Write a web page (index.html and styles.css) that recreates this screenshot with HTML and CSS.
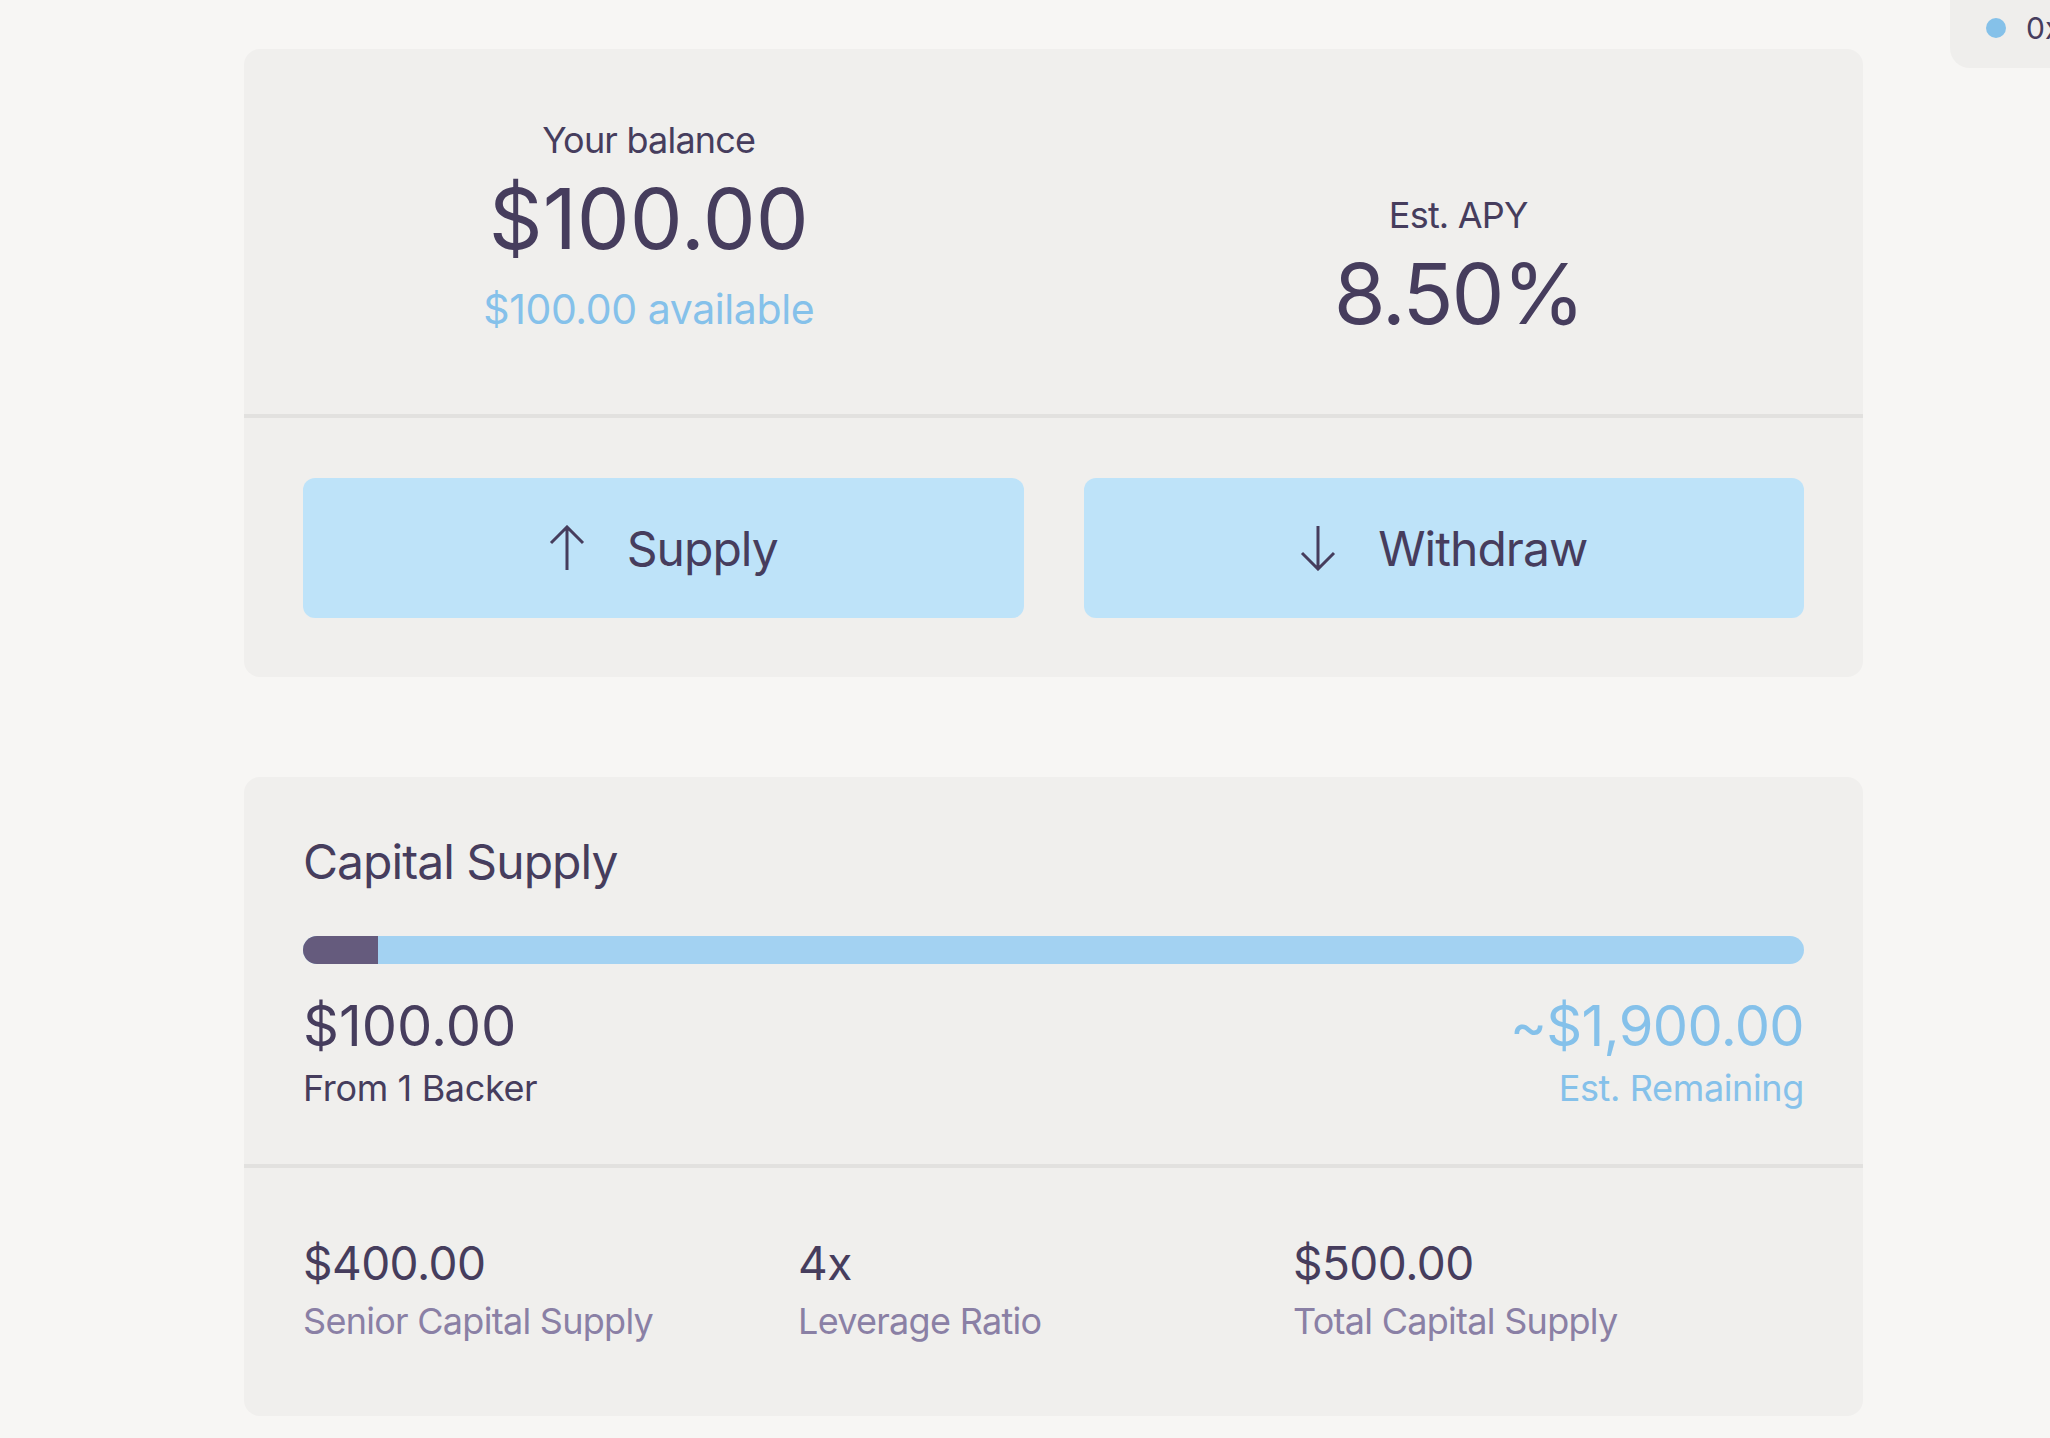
FILE: index.html
```html
<!DOCTYPE html>
<html lang="en">
<head>
<meta charset="utf-8">
<title>Pool</title>
<link rel="stylesheet" href="styles.css">
</head>
<body>
<div class="wallet">
  <span class="wallet-dot"></span>
  <span class="wallet-addr">0x1fa2…8c3d</span>
</div>
<main class="page">
  <section class="card">
    <div class="summary">
      <div class="summary-col">
        <div class="label">Your balance</div>
        <div class="big">$100.00</div>
        <div class="avail">$100.00 available</div>
      </div>
      <div class="summary-col summary-apy">
        <div class="label">Est. APY</div>
        <div class="big">8.50%</div>
      </div>
    </div>
    <div class="actions">
      <button class="btn" type="button">
        <svg class="btn-icon" viewBox="0 0 36 46" width="36" height="46" aria-hidden="true">
          <path d="M18 45 V2 M2 18 L18 2 L34 18" fill="none" stroke="currentColor" stroke-width="3"/>
        </svg>
        <span>Supply</span>
      </button>
      <button class="btn" type="button">
        <svg class="btn-icon" viewBox="0 0 36 46" width="36" height="46" aria-hidden="true">
          <path d="M18 1 V44 M2 28 L18 44 L34 28" fill="none" stroke="currentColor" stroke-width="3"/>
        </svg>
        <span>Withdraw</span>
      </button>
    </div>
  </section>

  <section class="card capital">
    <div class="capital-main">
      <h2 class="title">Capital Supply</h2>
      <div class="bar"><div class="bar-fill" style="width:5%"></div></div>
      <div class="legend">
        <div class="legend-item">
          <div class="mid">$100.00</div>
          <div class="label">From 1 Backer</div>
        </div>
        <div class="legend-item legend-right">
          <div class="mid">~$1,900.00</div>
          <div class="label">Est. Remaining</div>
        </div>
      </div>
    </div>
    <div class="stats">
      <div class="stat">
        <div class="stat-value">$400.00</div>
        <div class="stat-label">Senior Capital Supply</div>
      </div>
      <div class="stat">
        <div class="stat-value">4x</div>
        <div class="stat-label">Leverage Ratio</div>
      </div>
      <div class="stat">
        <div class="stat-value">$500.00</div>
        <div class="stat-label">Total Capital Supply</div>
      </div>
    </div>
  </section>
</main>
</body>
</html>
```

FILE: styles.css
```css
* { box-sizing: border-box; }

html, body {
  margin: 0;
  padding: 0;
  background: #f7f6f4;
  overflow: hidden;
}

body {
  font-family: Inter, "Noto Sans", "Liberation Sans", sans-serif;
  color: #463d5d;
  width: 2050px;
  height: 1438px;
  position: relative;
}

.wallet {
  position: absolute;
  top: -20px;
  left: 1950px;
  height: 88px;
  width: 260px;
  padding: 8px 0 0 36px;
  display: flex;
  align-items: center;
  gap: 20px;
  background: #efeeec;
  border-radius: 20px;
  white-space: nowrap;
}

.wallet-dot {
  width: 20px;
  height: 20px;
  border-radius: 50%;
  background: #85c1e9;
  flex: none;
}

.wallet-addr {
  font-size: 30px;
  line-height: 36px;
}

.page {
  padding: 49px 0 0 244px;
  display: flex;
  flex-direction: column;
  gap: 100px;
}

.card {
  width: 1619px;
  background: #f0efed;
  border-radius: 16px;
}

.summary {
  display: grid;
  grid-template-columns: 1fr 1fr;
  align-items: last baseline;
  padding: 69px 0 70px;
  border-bottom: 4px solid #e2e1df;
}

.summary-col {
  text-align: center;
}

.label {
  font-size: 36px;
  line-height: 44px;
  letter-spacing: -0.022em;
}

.big {
  font-size: 84px;
  line-height: 100px;
  margin-top: 7px;
}

.summary-apy .big {
  letter-spacing: -0.025em;
}

.summary-apy .label {
  margin-bottom: 5px;
}

.avail {
  font-size: 41px;
  line-height: 48px;
  margin-top: 16px;
  color: #85c1ea;
  letter-spacing: -0.01em;
}

.actions {
  display: grid;
  grid-template-columns: 1fr 1fr;
  gap: 60px;
  padding: 60px 59px 59px 59px;
}

.btn {
  height: 140px;
  border: 0;
  border-radius: 12px;
  background: #bee3f9;
  color: #463d5d;
  font-family: inherit;
  font-size: 48px;
  letter-spacing: -0.02em;
  display: flex;
  align-items: center;
  justify-content: center;
  gap: 42px;
  cursor: pointer;
}

.btn-icon {
  display: block;
}

.capital-main {
  padding: 56px 59px 54px;
  border-bottom: 4px solid #e2e1df;
}

.title {
  margin: 0;
  font-size: 48px;
  line-height: 58px;
  font-weight: 400;
  letter-spacing: -0.02em;
}

.bar {
  margin-top: 45px;
  height: 28px;
  border-radius: 14px;
  background: #a3d2f2;
  overflow: hidden;
}

.bar-fill {
  height: 100%;
  background: #655b7d;
}

.legend {
  margin-top: 28px;
  display: flex;
  justify-content: space-between;
}

.mid {
  font-size: 56px;
  line-height: 68px;
}

.legend-right .mid {
  letter-spacing: -0.012em;
}

.legend-item .label {
  margin-top: 6px;
  letter-spacing: -0.01em;
}

.legend-right {
  text-align: right;
  color: #85c1ea;
}

.stats {
  display: grid;
  grid-template-columns: 495px 495px 1fr;
  padding: 67px 59px 73px;
}

.stat-value {
  font-size: 46px;
  line-height: 56px;
  letter-spacing: -0.012em;
}

.stat-label {
  margin-top: 8px;
  font-size: 36px;
  line-height: 44px;
  color: #8a80a5;
  letter-spacing: -0.02em;
}
```
